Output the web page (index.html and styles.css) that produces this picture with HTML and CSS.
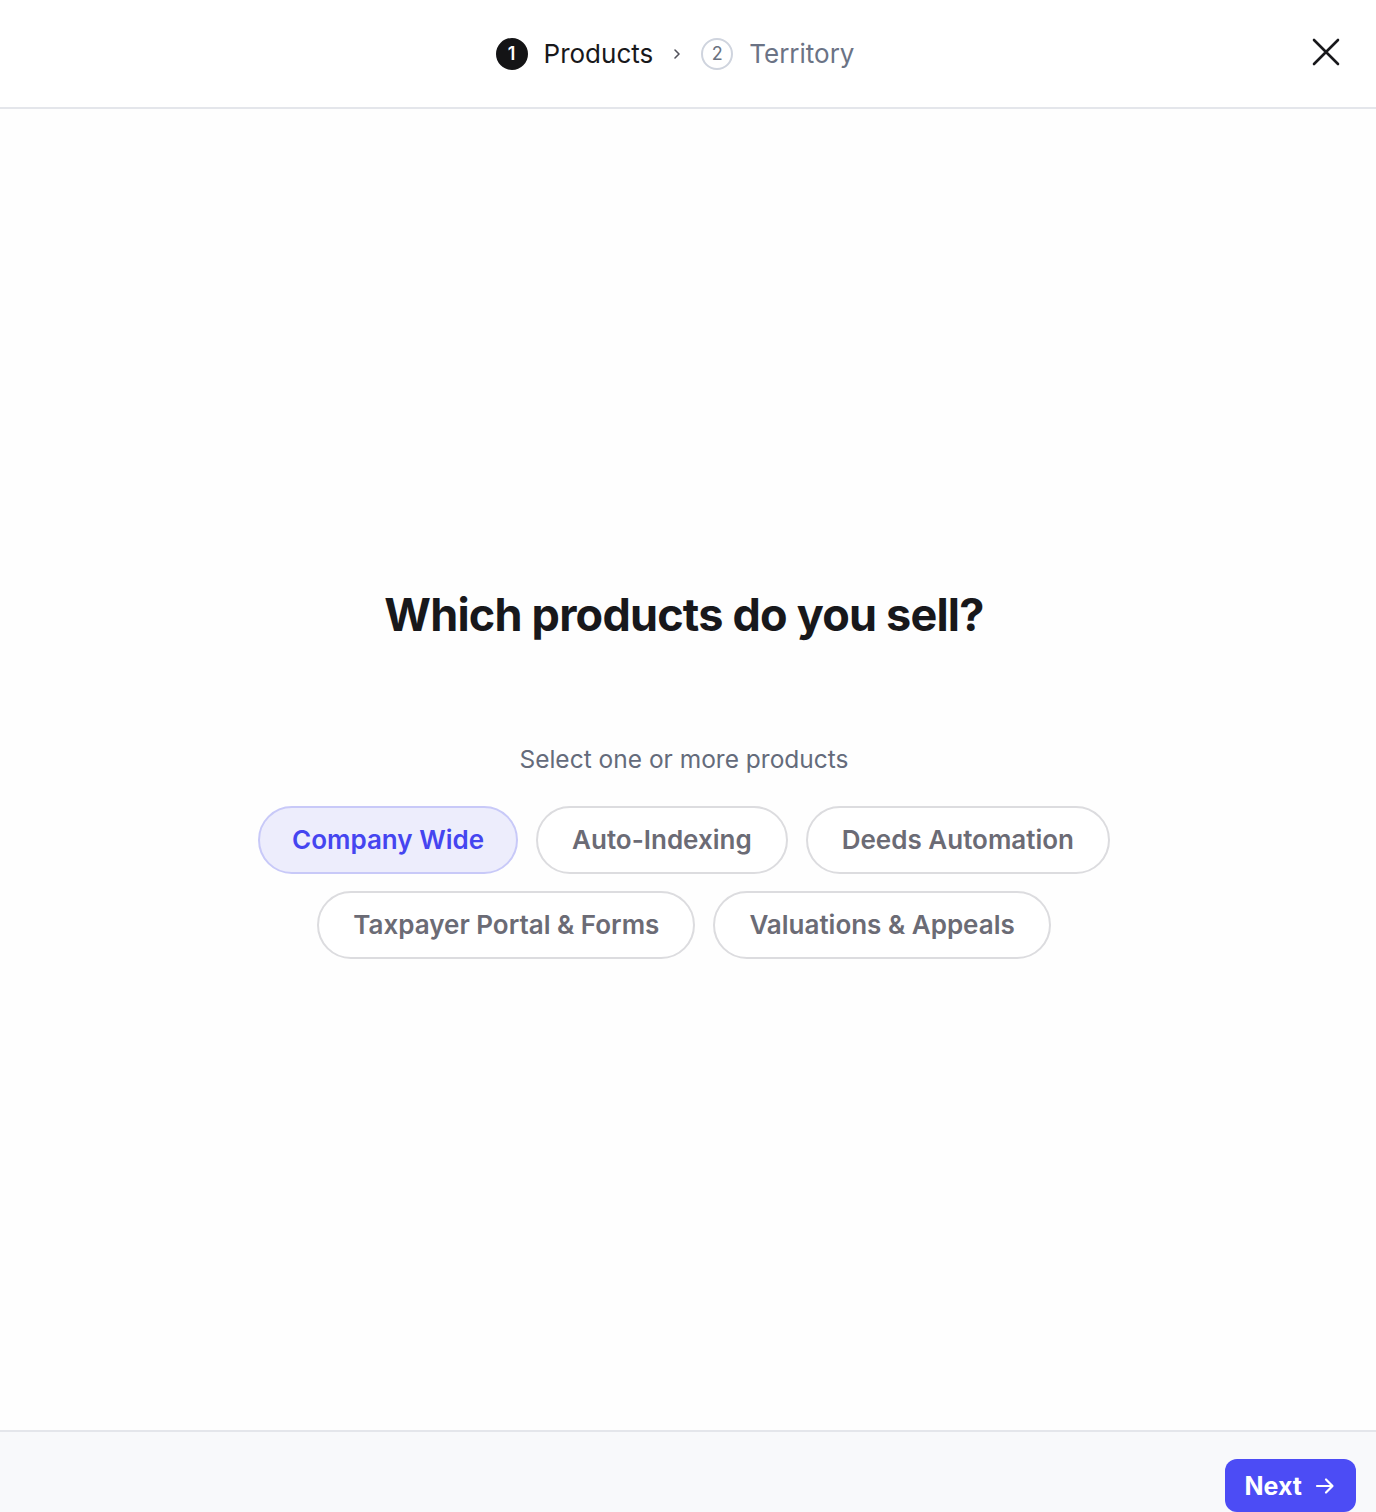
FILE: index.html
```html
<!DOCTYPE html>
<html lang="en">

<head>
    <meta charset="UTF-8">
    <meta name="viewport" content="width=device-width, initial-scale=1.0">
    <title>Which products do you sell?</title>
    <link rel="stylesheet" href="styles.css">
</head>

<body>
    <header class="top-bar">
        <nav class="steps">
            <div class="step step-active">
                <span class="step-num">1</span>
                <span class="step-label">Products</span>
            </div>
            <svg class="step-chevron" width="12" height="14" viewBox="0 0 12 14" fill="none">
                <path d="M4 3l4 4-4 4" stroke="#52525b" stroke-width="1.6" stroke-linecap="round" stroke-linejoin="round" />
            </svg>
            <div class="step">
                <span class="step-num">2</span>
                <span class="step-label">Territory</span>
            </div>
        </nav>
        <button class="close-btn" aria-label="Close">
            <svg width="28" height="28" viewBox="0 0 28 28" fill="none">
                <path d="M2 2l24 24M26 2L2 26" stroke="#18181b" stroke-width="2.6" stroke-linecap="round" />
            </svg>
        </button>
    </header>

    <main class="content">
        <h1 class="title">Which products do you sell?</h1>
        <p class="hint">Select one or more products</p>
        <div class="chips">
            <button class="chip chip-selected">Company Wide</button>
            <button class="chip">Auto-Indexing</button>
            <button class="chip">Deeds Automation</button>
            <button class="chip">Taxpayer Portal &amp; Forms</button>
            <button class="chip">Valuations &amp; Appeals</button>
        </div>
    </main>

    <footer class="bottom-bar">
        <button class="next-btn">
            Next
            <svg width="22" height="22" viewBox="0 0 22 22" fill="none">
                <path d="M3 11h15M12 4.5l6.5 6.5-6.5 6.5" stroke="#fff" stroke-width="2.2" stroke-linecap="round" stroke-linejoin="round" />
            </svg>
        </button>
    </footer>
</body>

</html>
```

FILE: styles.css
```css
* {
    box-sizing: border-box;
}

body {
    margin: 0;
    height: 100vh;
    display: flex;
    flex-direction: column;
    font-family: 'Inter', 'Noto Sans', sans-serif;
    background: #fff;
    color: #18181b;
}

.top-bar {
    height: 109px;
    flex-shrink: 0;
    border-bottom: 2px solid #e4e6eb;
    display: flex;
    align-items: center;
    justify-content: center;
    position: relative;
}

.steps {
    display: flex;
    align-items: center;
    gap: 18px;
    margin-right: 26px;
}

.step {
    display: flex;
    align-items: center;
    gap: 16px;
}

.step-num {
    width: 32px;
    height: 32px;
    border-radius: 50%;
    border: 2px solid #cfd4de;
    color: #6b7280;
    font-size: 18px;
    display: flex;
    align-items: center;
    justify-content: center;
}

.step-label {
    font-size: 26px;
    color: #6b7385;
}

.step-active .step-num {
    background: #141416;
    border-color: #141416;
    color: #fff;
    font-weight: 600;
}

.step-active .step-label {
    color: #18181b;
}

.close-btn {
    position: absolute;
    right: 36px;
    top: 38px;
    padding: 0;
    border: none;
    background: none;
    cursor: pointer;
    display: flex;
}

.content {
    flex: 1;
    display: flex;
    flex-direction: column;
    align-items: center;
    justify-content: center;
    background: #fefefe;
    padding: 6px 8px 0 0;
}

.title {
    margin: 0;
    font-size: 45px;
    font-weight: 700;
    letter-spacing: -0.8px;
    color: #18181b;
}

.hint {
    margin: 102px 0 32px;
    font-size: 24.5px;
    color: #646b7b;
}

.chips {
    display: flex;
    flex-wrap: wrap;
    justify-content: center;
    gap: 17px 18px;
    max-width: 880px;
}

.chip {
    height: 68px;
    padding: 0 34px;
    border: 2px solid #dcdcdf;
    border-radius: 34px;
    background: #fff;
    font-family: inherit;
    font-size: 26px;
    font-weight: 600;
    color: #6b6b75;
    cursor: pointer;
}

.chip-selected {
    padding: 0 32px;
    background: #ededfc;
    border-color: #c8c9f8;
    color: #4545f0;
}

.bottom-bar {
    height: 82px;
    flex-shrink: 0;
    border-top: 2px solid #e4e6eb;
    background: #f8f9fb;
    display: flex;
    justify-content: flex-end;
    align-items: flex-start;
    padding: 27px 20px 0 0;
}

.next-btn {
    height: 53px;
    padding: 0 20px 0 20px;
    border: none;
    border-radius: 12px;
    background: #4c4cf5;
    color: #fff;
    font-family: inherit;
    font-size: 25px;
    font-weight: 700;
    display: flex;
    align-items: center;
    gap: 12px;
    cursor: pointer;
}
```
